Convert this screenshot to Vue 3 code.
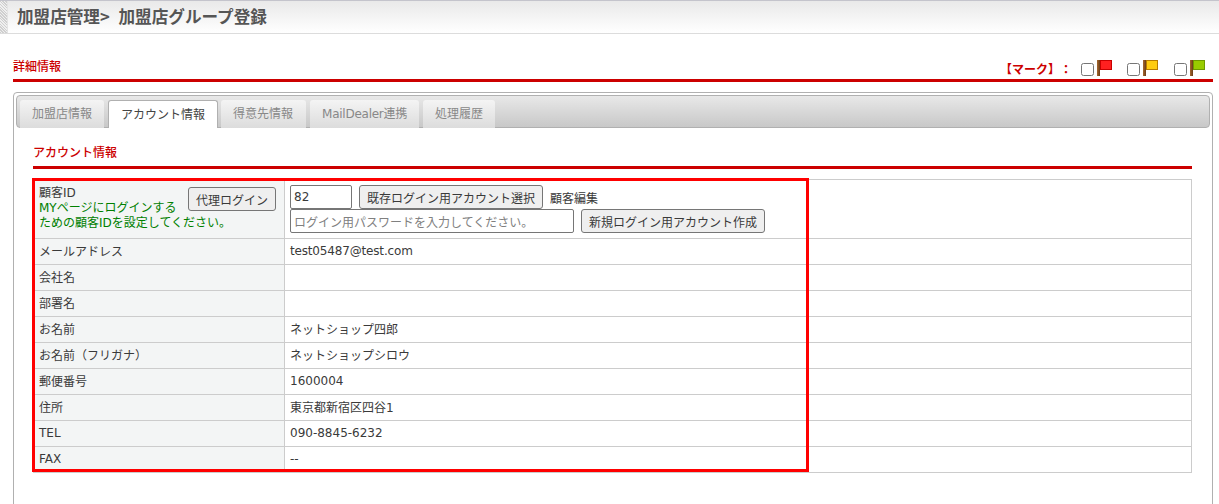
<script setup>
const rows = [
  ['メールアドレス', 'test05487@test.com', 'tight'],
  ['会社名', ''],
  ['部署名', ''],
  ['お名前', 'ネットショップ四郎'],
  ['お名前（フリガナ）', 'ネットショップシロウ'],
  ['郵便番号', '1600004'],
  ['住所', '東京都新宿区四谷1'],
  ['TEL', '090-8845-6232'],
  ['FAX', '--'],
]
const tabs = ['加盟店情報', 'アカウント情報', '得意先情報', 'MailDealer連携', '処理履歴']
const flags = [
  { fill: '#ff2020', edge: '#c80000' },
  { fill: '#ffcc10', edge: '#b87c00' },
  { fill: '#99cc00', edge: '#6f9a00' },
]
</script>

<template>
  <div class="page">
    <header class="head">
      <span class="stripe"></span>
      <h1>加盟店管理&gt; 加盟店グループ登録</h1>
    </header>

    <div class="section">
      <h2>詳細情報</h2>
      <div class="marks">
        <b>【マーク】：</b>
        <label v-for="(f, i) in flags" :key="i" class="mark">
          <input type="checkbox" />
          <svg width="15" height="16" viewBox="0 0 15 16">
            <defs>
              <linearGradient :id="'pole' + i" x1="0" x2="1" y1="0" y2="0">
                <stop offset="0" stop-color="#a86a30" />
                <stop offset="1" stop-color="#6a3c18" />
              </linearGradient>
            </defs>
            <rect x="0" y="0" width="3" height="16" :fill="'url(#pole' + i + ')'" />
            <rect x="3.5" y="0.5" width="11" height="9" :fill="f.fill" :stroke="f.edge" />
          </svg>
        </label>
      </div>
    </div>

    <div class="panel">
      <nav class="tabs">
        <a
          v-for="(t, i) in tabs"
          :key="t"
          class="tab"
          :class="{ active: i === 1, latin: i === 3 }"
        >{{ t }}</a>
      </nav>

      <div class="body">
        <h3>アカウント情報</h3>
        <div class="table-wrap">
          <table>
            <tbody>
              <tr class="first">
                <th>
                  <div class="idcell">
                    <div class="idtext">
                      顧客ID<br />
                      <span class="note">MYページにログインする<br />ための顧客IDを設定してください。</span>
                    </div>
                    <button class="proxy">代理ログイン</button>
                  </div>
                </th>
                <td>
                  <div class="line">
                    <input class="idinput" value="82" />
                    <button>既存ログイン用アカウント選択</button>
                    <span>顧客編集</span>
                  </div>
                  <div class="line">
                    <input class="pwinput" placeholder="ログイン用パスワードを入力してください。" />
                    <button>新規ログイン用アカウント作成</button>
                  </div>
                </td>
              </tr>
              <tr v-for="r in rows" :key="r[0]">
                <th>{{ r[0] }}</th>
                <td :class="r[2]">{{ r[1] }}</td>
              </tr>
            </tbody>
          </table>
          <div class="highlight"></div>
        </div>
      </div>
    </div>
  </div>
</template>

<style>
html, body { margin: 0; background: #fff; }
</style>

<style scoped>
.page {
  width: 1219px;
  height: 504px;
  overflow: hidden;
  font-family: "DejaVu Sans", "Noto Sans CJK JP", sans-serif;
  font-size: 12px;
  color: #3a3a3a;
  text-spacing-trim: space-all;
}
.head {
  height: 32px;
  display: flex;
  align-items: center;
  border-top: 1px solid #c4c4cc;
  border-bottom: 1px solid #dcdcdc;
  background: linear-gradient(#e9e9e9, #ffffff);
}
.stripe {
  width: 7px;
  height: 32px;
  border-right: 1px solid #e4e4e4;
  background: repeating-linear-gradient(45deg, #cfcfcf 0 1px, #efefef 1px 2px);
}
h1 {
  margin: -2px 0 0 9px;
  font-size: 16.6px;
  word-spacing: 5px;
  font-weight: bold;
  color: #555;
  font-family: "Noto Sans CJK JP", sans-serif;
}
.section {
  margin: 0 6px 0 13px;
  height: 45px;
  display: flex;
  justify-content: space-between;
  align-items: flex-end;
  border-bottom: 3px solid #cc0000;
}
h2 {
  margin: 0 0 5px;
  font-size: 12px;
  font-weight: 500;
  color: #cc0000;
  font-family: "Noto Sans CJK JP", sans-serif;
}
.marks {
  display: flex;
  align-items: center;
  height: 20px;
  margin-bottom: 1px;
  margin-right: 8px;
  color: #cc0000;
}
.marks b { font-weight: bold; font-family: "Noto Sans CJK JP", sans-serif; margin-right: 9px; }
.mark { display: flex; align-items: flex-start; }
.mark + .mark { margin-left: 15px; }
.mark + .mark + .mark { margin-left: 16px; }
.mark input { width: 13px; height: 13px; margin: 3px 3px 0 0; }
.panel {
  margin: 10px 6px 0 13px;
  height: 420px;
  border: 1px solid #b0b0b0;
  border-radius: 4px;
  padding: 2px;
  box-sizing: border-box;
}
.tabs {
  display: flex;
  gap: 4px;
  height: 33px;
  padding: 4px 0 0 3px;
  box-sizing: border-box;
  border: 1px solid #b0b0b0;
  border-radius: 4px;
  background: linear-gradient(#e8e8e8, #c8c8c8);
}
.tab {
  height: 28px;
  padding: 0 12px 3px;
  box-sizing: border-box;
  display: flex;
  align-items: center;
  color: #888;
  border-radius: 3px 3px 0 0;
  background: linear-gradient(#f4f4f4, #dcdcdc);
}
.tab:nth-child(3) { padding-right: 13px; }
.tab.latin { letter-spacing: -0.25px; }
.tab.active {
  color: #444;
  background: #fff;
  border: 1px solid #b0b0b0;
  border-bottom: 0;
  margin-right: -1px;
}
.body { padding: 0 18px 0 17px; }
h3 {
  margin: 0;
  padding-top: 15px;
  height: 23px;
  font-size: 12px;
  font-weight: 500;
  color: #cc0000;
  border-bottom: 3px solid #cc0000;
  font-family: "Noto Sans CJK JP", sans-serif;
}
.table-wrap { position: relative; margin-top: 10px; }
table {
  width: 100%;
  border-collapse: collapse;
  table-layout: fixed;
}
th, td {
  height: 23px;
  padding: 0 5px 2px;
  border: 1px solid #ccc;
  text-align: left;
  font-weight: normal;
  vertical-align: middle;
  color: #3a3a3a;
  white-space: nowrap;
}
td.tight { letter-spacing: -0.17px; }
th { width: 240px; padding-left: 5px; background: #f3f5f5; }
.first th, .first td { height: 58px; padding-bottom: 0; }
.idcell { display: flex; justify-content: space-between; align-items: flex-start; }
.idtext { line-height: 15px; flex: 1; width: 0; margin-top: -1px; }
.note { color: #008000; }
button {
  height: 24px;
  padding: 0 7px;
  font: inherit;
  color: #3a3a3a;
  background: #efefef;
  border: 1px solid #767676;
  border-radius: 3px;
  white-space: nowrap;
  font-family: "Noto Sans CJK JP", sans-serif;
}
.proxy { margin-top: 0; margin-right: 3px; }
.line { display: flex; align-items: center; gap: 7px; height: 24px; }
input:not([type]) {
  height: 24px;
  box-sizing: border-box;
  padding: 0 3px;
  font: inherit;
  color: #3a3a3a;
  border: 1px solid #767676;
  border-radius: 2px;
}
.idinput { width: 62px; }
.pwinput { width: 284px; font-family: "Noto Sans CJK JP", sans-serif !important; }
.pwinput::placeholder { color: #808080; }
.line span { font-family: "Noto Sans CJK JP", sans-serif; }
.highlight {
  position: absolute;
  left: -1px;
  top: -1px;
  width: 771px;
  height: 288px;
  border: 3px solid #ff0000;
  pointer-events: none;
}
</style>
